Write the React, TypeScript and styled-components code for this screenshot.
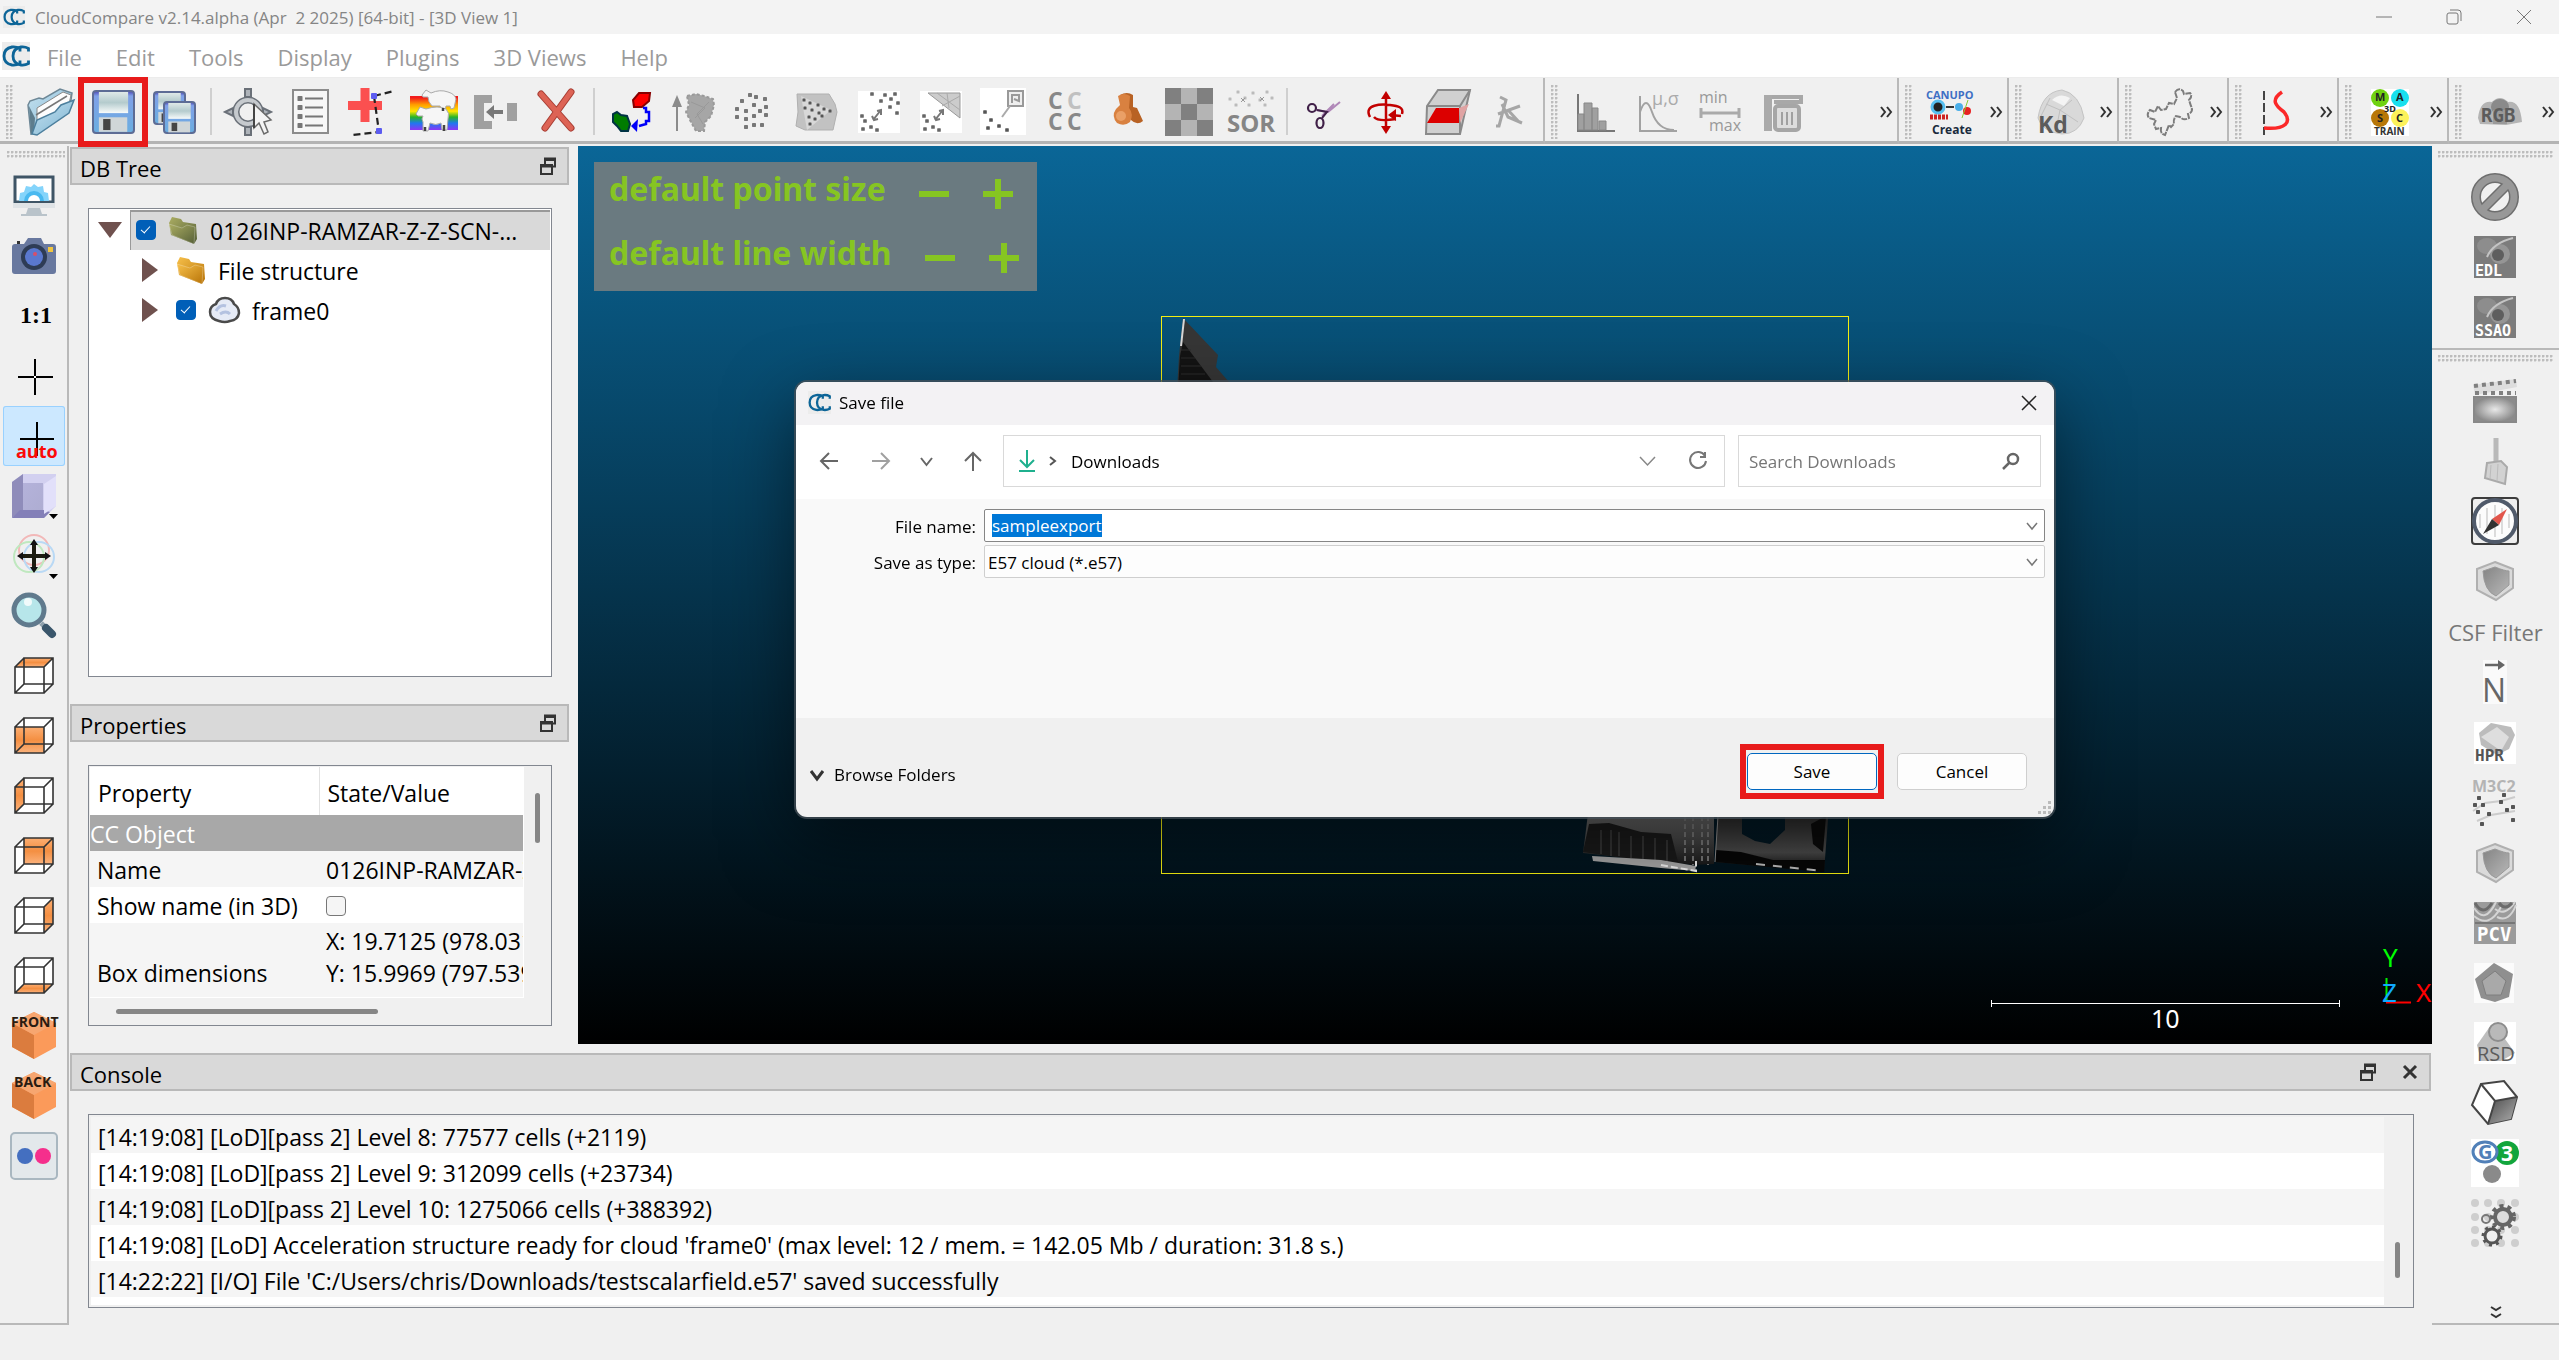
import React, { useEffect, useRef } from "react";
import styled, { createGlobalStyle } from "styled-components";

const Global = createGlobalStyle`
  *, *::before, *::after { box-sizing: border-box; }
  html, body { margin: 0; padding: 0; background: #f0f0f0; }
  body, button, input, select { font-family: "Open Sans", "Noto Sans", sans-serif; color: #000; }
  button, input, select { margin: 0; padding: 0; border: 0; background: none; border-radius: 0; outline: 0; }
  svg { display: block; flex: none; }
`;

/* ---------- layout ---------- */
const App_ = styled.div`
  display: flex;
  flex-direction: column;
  height: 100vh;
  overflow: hidden;
  font-size: 22px;
`;
const TitleBar = styled.header`
  display: flex;
  align-items: center;
  height: 34px;
  flex: none;
  padding-left: 3px;
  gap: 10px;
  background: #f3f3f3;
  color: #858585;
  font-size: 17px;
  white-space: pre;
`;
const WindowButtons = styled.div`
  display: flex;
  margin-left: auto;
`;
const WindowButton = styled.button`
  display: grid;
  place-items: center;
  width: 70px;
  height: 34px;
`;
const MenuBar = styled.nav`
  display: flex;
  align-items: center;
  height: 44px;
  flex: none;
  padding-left: 2px;
  background: #fff;
  border-bottom: 1px solid #ececec;
`;
const MenuItem = styled.button`
  height: 43px;
  padding: 2px 17px 0;
  color: #9a9a9a;
  font-size: 22px;
`;
const ToolStrip = styled.div`
  display: flex;
  height: 66px;
  flex: none;
  background: #f0f0f0;
`;
const ToolGroup = styled.div<{ $grow?: boolean; $wide?: number }>`
  display: flex;
  align-items: center;
  flex: ${(p) => (p.$grow ? "1 1 0" : "none")};
  width: ${(p) => (p.$wide ? p.$wide + "px" : "auto")};
  padding-top: 4px;
  border-right: 2px solid #b9b9b9;
  border-bottom: 3px solid #b4b4b4;
  &:first-child { padding-right: 2px; }
  &:last-child { border-right: 0; }
`;
const Grip = styled.span<{ $across?: boolean }>`
  flex: none;
  width: ${(p) => (p.$across ? "auto" : "8px")};
  height: ${(p) => (p.$across ? "8px" : "54px")};
  margin: ${(p) => (p.$across ? "5px 5px 9px 6px" : "0 6px")};
  background-image: radial-gradient(circle at 1px 1px, #bdbdbd 1px, transparent 2px);
  background-size: 4px 4px;
`;
const Divider = styled.span`
  flex: none;
  width: 2px;
  height: 47px;
  margin: 0 5px 0 4px;
  background: #cfcfcf;
`;
const Tool = styled.button<{ $on?: boolean }>`
  position: relative;
  display: grid;
  place-items: center;
  flex: none;
  width: 62px;
  height: 60px;
  border-radius: 3px;
  background: ${(p) => (p.$on ? "#cce8ff" : "transparent")};
  box-shadow: ${(p) => (p.$on ? "inset 0 0 0 1px #99d1ff" : "none")};
`;
const More = styled.button`
  display: grid;
  place-items: center;
  width: 16px;
  height: 40px;
  margin-left: auto;
  margin-right: 3px;
`;
const Highlight = styled.span<{ $x: number; $y: number }>`
  position: absolute;
  inset: ${(p) => `${p.$y}px ${p.$x}px`};
  border: 6px solid #e81b1b;
  pointer-events: none;
`;
const Main = styled.main`
  display: grid;
  grid-template-columns: 70px minmax(0, 1fr) 127px;
  flex: 1;
  min-height: 0;
  padding-top: 2px;
  padding-bottom: 35px;
`;
const LeftBar = styled.div`
  display: flex;
  flex-direction: column;
  align-items: flex-start;
  width: 69px;
  padding-left: 3px;
  border-right: 2px solid #b9b9b9;
  border-bottom: 2px solid #b9b9b9;
  & > ${Grip} { width: 58px; margin-left: 4px; margin-bottom: 7px; }
`;
const RightBar = styled.div`
  display: flex;
  flex-direction: column;
  border-bottom: 2px solid #b9b9b9;
`;
const RightGroup = styled.div<{ $grow?: boolean }>`
  display: flex;
  flex-direction: column;
  flex: ${(p) => (p.$grow ? 1 : "none")};
  padding-bottom: ${(p) => (p.$grow ? 0 : 1)}px;
  border-bottom: ${(p) => (p.$grow ? 0 : 2)}px solid #b9b9b9;
  & > ${Tool} { align-self: center; margin-right: 1px; }
  & > ${Grip} { margin-bottom: 8px; }
`;
const TextTool = styled.button`
  height: 42px;
  color: #777;
  font-size: 22px;
`;
const MoreDown = styled.button`
  display: grid;
  place-items: center;
  height: 22px;
  margin-top: auto;
`;
const Centre = styled.div`
  display: flex;
  flex-direction: column;
  min-width: 0;
`;
const Upper = styled.div`
  display: flex;
  flex: 1;
  min-height: 0;
`;
const Docks = styled.div`
  display: flex;
  flex-direction: column;
  flex: none;
  width: 508px;
  padding-right: 9px;
  padding-top: 1px;
`;
const Dock = styled.section<{ $grow?: boolean }>`
  display: flex;
  flex-direction: column;
  flex: ${(p) => (p.$grow ? "1 1 0" : "none")};
  min-height: 0;
`;
const DockTitle = styled.h2`
  display: flex;
  align-items: center;
  flex: none;
  height: 38px;
  margin: 0;
  padding: 4px 11px 0 8px;
  border: 2px solid #b9b9b9;
  background: #d9d9d9;
  font-size: 22px;
  line-height: 30px;
  font-weight: 400;
`;
const DockButtons = styled.span`
  display: flex;
  gap: 26px;
  margin-left: auto;
  padding-bottom: 4px;
`;
const Frame = styled.div`
  flex: 1;
  min-height: 0;
  margin: 23px 17px 27px 18px;
  border: 1px solid #828790;
  background: #fff;
`;
const Tree = styled.ul`
  margin: 0;
  padding: 1px;
  list-style: none;
`;
const TreeRow = styled.li<{ $depth: number }>`
  display: flex;
  align-items: center;
  height: 40px;
  padding-left: ${(p) => 4 + p.$depth * 40}px;
  font-size: 23px;
`;
const Twisty = styled.button`
  display: grid;
  place-items: center;
  flex: none;
  width: 32px;
  height: 40px;
  margin-right: 4px;
`;
const Node = styled.span<{ $selected?: boolean }>`
  display: flex;
  align-items: center;
  flex: 1;
  min-width: 0;
  height: 40px;
  padding-left: 6px;
  gap: 12px;
  background: ${(p) => (p.$selected ? "#d9d9d9" : "transparent")};
  box-shadow: ${(p) => (p.$selected ? "inset 1px 2px 0 #999" : "none")};
`;
const NodeName = styled.span`
  overflow: hidden;
  padding-top: 2px;
  white-space: nowrap;
`;
const Tick = styled.input`
  appearance: none;
  position: relative;
  flex: none;
  display: block;
  width: 20px;
  height: 20px;
  border: 1px solid #777;
  border-radius: 4px;
  background: #f5f5f5;
  &:checked { background: #005fb8; border-color: #005fb8; }
  &:checked::after {
    content: "";
    position: absolute;
    left: 6px;
    top: 3px;
    width: 5px;
    height: 9px;
    border: solid #fff;
    border-width: 0 1px 1px 0;
    transform: rotate(42deg);
  }
`;
const PropFrame = styled.div`
  display: grid;
  grid-template-columns: minmax(0, 1fr) 27px;
  grid-template-rows: 231px 27px;
  margin: 23px 17px 18px 18px;
  padding: 1px 0 0 1px;
  height: 261px;
  border: 1px solid #828790;
  background: #f0f0f0;
`;
const PropClip = styled.div`
  overflow: hidden;
  border-right: 1px solid #fff;
  border-bottom: 1px solid #fff;
`;
const PropTable = styled.table`
  width: 640px;
  table-layout: fixed;
  border-collapse: collapse;
  background: #fff;
  font-size: 23px;
  line-height: 32px;
  white-space: nowrap;
  th { height: 48px; padding: 3px 0 0 8px; text-align: left; font-weight: 400; }
  th + th { border-left: 1px solid #e2e2e2; }
  th:first-child { width: 229px; }
  td { height: 36px; padding: 2px 0 0 7px; }
`;
const PropRow = styled.tr<{ $tone: "head" | "odd" | "even" }>`
  background: ${(p) => ({ head: "#a8a8a8", odd: "#f5f5f5", even: "#fff" })[p.$tone]};
  color: ${(p) => (p.$tone === "head" ? "#fff" : "#000")};
  & > td[colspan] { padding-left: 0; }
`;
const Track = styled.div<{ $flat?: boolean }>`
  display: flex;
  justify-content: ${(p) => (p.$flat ? "flex-start" : "center")};
  align-items: ${(p) => (p.$flat ? "center" : "flex-start")};
`;
const Thumb = styled.span<{ $w: number; $h: number; $before: string }>`
  width: ${(p) => p.$w}px;
  height: ${(p) => p.$h}px;
  margin: ${(p) => p.$before};
  border-radius: 3px;
  background: #868686;
`;
const ConsoleDock = styled.section`
  flex: none;
  margin-top: 9px;
  padding-right: 1px;
`;
const ConsoleFrame = styled.div`
  display: flex;
  height: 194px;
  margin: 23px 17px 17px 18px;
  padding: 2px 0 2px 2px;
  border: 1px solid #828790;
  background: #f0f0f0;
`;
const Lines = styled.ol`
  flex: 1;
  margin: 0;
  padding: 0;
  list-style: none;
  background: #fff;
  font-size: 23px;
`;
const Line = styled.li`
  height: 36px;
  padding-left: 7px;
  line-height: 40px;
  &:nth-child(odd) { background: #f5f5f5; }
`;

/* ---------- 3D view ---------- */
const View = styled.div`
  position: relative;
  flex: 1;
  overflow: hidden;
  background: linear-gradient(#0a6697, #000);
`;
const HotZone = styled.div`
  position: absolute;
  left: 16px;
  top: 16px;
  width: 443px;
  padding: 0 0 1px 15px;
  background: #6a7a80;
`;
const HotRow = styled.div`
  display: flex;
  align-items: center;
  gap: 33px;
  height: 64px;
  padding-bottom: 10px;
  color: #86c522;
  font: bold 32px/36px "Noto Sans", sans-serif;
`;
const HotButtons = styled.span`
  display: flex;
  gap: 34px;
  padding-top: 10px;
`;
const Cloud = styled.svg`
  position: absolute;
  left: 583px;
  top: 170px;
`;
const Corner = styled.svg`
  position: absolute;
  right: 0;
  bottom: 0;
`;

/* ---------- dialog ---------- */
const Dialog = styled.div`
  position: fixed;
  left: 796px;
  top: 382px;
  width: 1258px;
  border-radius: 11px;
  overflow: hidden;
  background: #f0f0f0;
  font-size: 17px;
`;
const DialogShade = styled.div`
  & > ${Dialog} { box-shadow: 0 0 0 2px rgba(70, 80, 88, 0.75), 0 24px 70px rgba(0, 0, 0, 0.5); }
`;
const DialogTitle = styled.div`
  display: flex;
  align-items: center;
  gap: 8px;
  height: 43px;
  padding: 0 17px 2px 12px;
  background: #f3f2f4;
  & > button { margin-left: auto; }
`;
const NavRow = styled.div`
  display: flex;
  align-items: center;
  height: 74px;
  padding: 0 13px 2px 8px;
  background: #fff;
`;
const NavButton = styled.button<{ $w: number }>`
  display: grid;
  place-items: center;
  width: ${(p) => p.$w}px;
  height: 50px;
`;
const Address = styled.div`
  display: flex;
  align-items: center;
  flex: 1;
  height: 52px;
  margin-left: 2px;
  margin-right: 13px;
  padding: 0 16px 0 15px;
  gap: 14px;
  border: 1px solid #d9d9d9;
  & > :nth-child(4) { margin-left: auto; margin-right: 18px; }
`;
const SearchBox = styled.label`
  display: flex;
  align-items: center;
  width: 303px;
  height: 52px;
  padding: 0 20px 0 10px;
  border: 1px solid #d9d9d9;
  & > input { flex: 1; min-width: 0; font-size: 17px; height: 40px; }
  & > input::placeholder { color: #767676; opacity: 1; }
`;
const Fields = styled.div`
  display: grid;
  grid-template-columns: 180px 1fr;
  grid-auto-rows: 33px;
  row-gap: 3px;
  column-gap: 8px;
  align-content: start;
  align-items: center;
  height: 219px;
  padding: 10px 9px 0 0;
  background: #f9f9f9;
  & > label { text-align: right; padding-top: 2px; }
`;
const Combo = styled.div<{ $strong?: boolean }>`
  display: flex;
  align-items: center;
  position: relative;
  height: 33px;
  border: 1px solid ${(p) => (p.$strong ? "#868686" : "#cfcfcf")};
  border-radius: 2px;
  background: ${(p) => (p.$strong ? "#fff" : "#fdfdfd")};
  & > input { flex: 1; height: 29px; padding-left: 7px; font-size: 17px; line-height: 25px; }
  & > input::selection { background: #0078d7; color: #fff; }
  & > select { flex: 1; height: 31px; padding: 2px 0 0 3px; font-size: 17px; appearance: none; }
  & > svg { position: absolute; right: 6px; top: 12px; pointer-events: none; }
`;
const Footer = styled.div`
  display: flex;
  align-items: center;
  height: 99px;
  padding: 14px 27px 0 14px;
  gap: 20px;
  position: relative;
`;
const Browse = styled.button`
  display: flex;
  align-items: center;
  gap: 10px;
  height: 30px;
  margin-right: auto;
  font-size: 17px;
`;
const Push = styled.button<{ $main?: boolean }>`
  position: relative;
  width: 130px;
  height: 37px;
  margin-bottom: 6px;
  border: 1px solid ${(p) => (p.$main ? "#0067c0" : "#cfcfcf")};
  border-radius: 5px;
  background: #fdfdfd;
  font-size: 17px;
`;
const SizeGrip = styled.svg`
  position: absolute;
  right: 3px;
  bottom: 3px;
`;

/* ---------- drawings ---------- */
type Kids = { children?: React.ReactNode; w?: number; h?: number; box?: string };
const I = ({ children, w = 48, h = 48, box }: Kids) => (
  <svg width={w} height={h} viewBox={box ?? `0 0 ${w} ${h}`} fill="none" overflow="visible" aria-hidden="true">{children}</svg>
);
const T = ({ x, y, s, c = "#777", children, f = "Open Sans", b = true }: { x: number; y: number; s: number; c?: string; children: string; f?: string; b?: boolean }) => (
  <text x={x} y={y} fontSize={s} fill={c} fontFamily={f} fontWeight={b ? 700 : 400}>{children}</text>
);
const Dots = ({ at, r = 2, c = "#777" }: { at: number[][]; r?: number; c?: string }) => (
  <g fill={c}>{at.map(([x, y], i) => <rect key={i} x={x - r} y={y - r} width={r * 2} height={r * 2} rx={r / 3} />)}</g>
);
const Logo = ({ s }: { s: number }) => (
  <I w={s} h={s} box="0 0 28 28">
    <rect width="28" height="28" fill="#ececec" />
    <path d="M18 9.500V6.500Q14 4.500 10 5Q2 6.500 2 14Q2 21.500 10 23Q14 23.500 18 21.500V18.500" stroke="#0d6598" strokeWidth="2.800" />
    <path d="M26.500 9.500V6.500Q23 4.500 19 5Q11 6.500 11 14Q11 21.500 19 23Q23 23.500 26.500 21.500V18.500" stroke="#0d6598" strokeWidth="2.800" />
  </I>
);
const Defs = () => (
  <svg width="0" height="0" style={{ position: "absolute" }} aria-hidden="true">
    <defs>
      <linearGradient id="blue" x2="0" y2="1"><stop stopColor="#4c44b4" /><stop offset=".12" stopColor="#7fa0e8" /><stop offset="1" stopColor="#6aaee0" /></linearGradient>
      <linearGradient id="paper" x2="0" y2="1"><stop stopColor="#dfe9e8" /><stop offset=".5" stopColor="#b4cbcd" /><stop offset="1" stopColor="#f8fbfb" /></linearGradient>
      <linearGradient id="folder" x2="1" y2="1"><stop stopColor="#c6e2f0" /><stop offset="1" stopColor="#7db4d2" /></linearGradient>
      <linearGradient id="gold" x2="1" y2="1"><stop stopColor="#f7c04a" /><stop offset="1" stopColor="#b87408" /></linearGradient>
      <linearGradient id="olive" x2="1" y2="1"><stop stopColor="#abad62" /><stop offset="1" stopColor="#566038" /></linearGradient>
      <linearGradient id="grey" x2="1" y2="1"><stop stopColor="#848484" /><stop offset="1" stopColor="#b8b8b8" /></linearGradient>
      <radialGradient id="shine"><stop stopColor="#e8e8e8" /><stop offset="1" stopColor="#8b8b8b" /></radialGradient>
      <linearGradient id="dark" x2="1" y2="1"><stop stopColor="#4a4a4a" /><stop offset="1" stopColor="#b0b0b0" /></linearGradient>
      <linearGradient id="rainbow" x2="0" y2="1">
        <stop offset=".05" stopColor="#f21c1c" /><stop offset=".25" stopColor="#ff9b00" /><stop offset=".45" stopColor="#ffe600" /><stop offset=".62" stopColor="#27b427" /><stop offset=".8" stopColor="#1e78f0" /><stop offset="1" stopColor="#8d35f5" />
      </linearGradient>
      <linearGradient id="orange" x2="0" y2="1"><stop stopColor="#fcae72" /><stop offset=".5" stopColor="#f48f42" /><stop offset="1" stopColor="#fbb27c" /></linearGradient>
      <linearGradient id="cubeBack" x2="1" y2="1"><stop stopColor="#b4b2da" /><stop offset="1" stopColor="#aeadd2" /></linearGradient>
      <linearGradient id="scanA" x2="0" y2="1"><stop stopColor="#777" /><stop offset=".55" stopColor="#484848" /><stop offset="1" stopColor="#191919" /></linearGradient>
      <linearGradient id="scanB" x2="0" y2="1"><stop stopColor="#222" /><stop offset=".7" stopColor="#4b4b4b" /><stop offset="1" stopColor="#050505" /></linearGradient>
    </defs>
  </svg>
);

const OpenIcon = () => (
  <I><path d="M1 17 L3 13 L12 10 L16 11 L33 1 L45 5 L44 12 L12 44 L4 46 Z" fill="url(#folder)" stroke="#6d8796" strokeWidth="1.500" />
    <path d="M10 20 L36 4 L44 7 L42 16 L10 36 Z" fill="#fdfdfd" stroke="#888" /><path d="M9 27 L40 8" stroke="#777" strokeWidth="1.500" /><path d="M2 18L4 45L7 46L8 30Z" fill="#5e7d8d" />
    <path d="M5 46 L10 32 L28 24 L34 17 L47 12 L42 25 L10 47 Z" fill="url(#folder)" stroke="#4c7f9d" strokeWidth="1.500" /></I>
);
const Disk = ({ x, y, w, h }: { x: number; y: number; w: number; h: number }) => (
  <g><rect x={x + 1} y={y + 1} width={w - 2} height={h - 2} rx="3" fill="url(#blue)" stroke="#5d6c95" strokeWidth="2" />
    <rect x={x + w * 0.16} y={y + 2} width={w * 0.68} height={h * 0.48} fill="url(#paper)" />
    <rect x={x + w * 0.16} y={y + h * 0.62} width={w * 0.66} height={h * 0.33} fill="#d0d6d8" />
    <rect x={x + w * 0.26} y={y + h * 0.66} width={w * 0.17} height={h * 0.25} fill="#454545" /></g>
);
const SaveIcon = () => <I><Disk x={3} y={2} w={43} h={44} /></I>;
const SaveAllIcon = () => <I><Disk x={2} y={3} w={33} h={34} /><Disk x={12} y={13} w={33} h={33} /></I>;
const PickIcon = () => (
  <I><path d="M21 1H27V9H21ZM21 39H27V47H21ZM1 24L9 20V28ZM47 24L39 20V28Z" fill="#aeb3b9" stroke="#6a7078" strokeWidth="2" />
    <circle cx="24" cy="24" r="12" stroke="#6a7078" strokeWidth="7" /><circle cx="24" cy="24" r="12" stroke="#c6cace" strokeWidth="4" />
    <path d="M30 16V40L35 35L40 46L44 44L40 34L47 32Z" fill="#f4f4f4" stroke="#6a6a6a" strokeWidth="1.500" /><path d="M30 16V40" stroke="#444" strokeWidth="2" /></I>
);
const ListIcon = () => (
  <I><rect x="7" y="2" width="35" height="43" fill="#f7f7f7" stroke="#8c8c8c" strokeWidth="2" />
    <path d="M19 10.500H37M19 19.500H37M19 28.500H37M19 37.500H37" stroke="#777" strokeWidth="2" /><Dots at={[[14, 10.500], [14, 19.500], [14, 28.500], [14, 37.500]]} r={2.500} /></I>
);
const AddPointIcon = () => (
  <I><path d="M0 17.500H34M17 0V34" stroke="#fb5050" strokeWidth="9" /><path d="M26 8 L46 3 M26 8 L31 44 L4 47" stroke="#222" strokeWidth="2.200" strokeDasharray="7 4" /><Dots at={[[26, 8], [31, 43]]} r={3} c="#5b5bf0" /></I>
);
const SheepIcon = () => (
  <I><rect y="8" width="48" height="34" fill="url(#rainbow)" />
    <path d="M12 7L16 2L21 5Q30 1 38 4Q45 6 46 11L44 20L41 21L40 18H36L35 23H32L30 18H22Q18 14 18 9L13 9Z" fill="#f6f6f6" stroke="#aaa" />
    <path d="M6 26L10 19L16 21Q28 17 36 21Q40 25 38 31L37 42H32L31 35Q26 38 20 35L18 43H13L13 34Q11 31 13 28L8 28Z" fill="#f6f6f6" stroke="#aaa" />
    <path d="M15 39V43M34 37V43M33 20V23" stroke="#444" strokeWidth="2.500" /></I>
);
const MergeIcon = () => (
  <I><path d="M2 7H20V15H12V33H20V41H2Z" fill="#a0a0a0" /><rect x="35" y="15" width="10" height="18" fill="#a0a0a0" /><path d="M14 24 L22 17 V22 H31 V26 H22 V31 Z" fill="#777" /></I>
);
const DeleteIcon = () => <I><path d="M7 6 L37 40 M37 4 L11 40" stroke="#a83e34" strokeWidth="7" strokeLinecap="round" /><path d="M7 6 L37 40 M37 4 L11 40" stroke="#dd6355" strokeWidth="5" strokeLinecap="round" /></I>;
const CloneIcon = () => (
  <I><path d="M32 5H43L42 13L35 19H27L26 12Z" fill="#fe0000" stroke="#800" strokeWidth="2" /><path d="M10 24L14 27L20 28L23 36L21 43H14L10 38L6 34V26Z" fill="#007c00" stroke="#034" strokeWidth="2" />
    <path d="M36 20H39V24H42V33H39V36L32 38" stroke="#0000f8" strokeWidth="2.500" /><path d="M24 38 L31 31 L30 44 Z" fill="#0000f8" /></I>
);
const NormalsIcon = () => <I><path d="M8 43V10" stroke="#8b8b8b" strokeWidth="2" /><path d="M8 7L13 19H3Z" fill="#8b8b8b" /><path d="M18 8L27 6L35 8L44 11L45 17L42 28L36 34L35 43H27L22 34L17 24L20 17Z" fill="#a6a6a6" stroke="#9a9a9a" strokeWidth="2" strokeDasharray="3 2" /><path d="M22 14L36 20L26 30M40 14L28 26L34 36" stroke="#999" /></I>;
const ring = [[19, 7], [25, 9], [11, 13], [34, 11], [35, 19], [23, 17], [6, 21], [15, 23], [29, 23], [6, 29], [15, 31], [23, 28], [35, 27], [15, 39], [23, 37], [31, 37]];
const SubsampleIcon = () => <I><Dots at={ring} /></I>;
const OctreeIcon = () => <I><path d="M4 6H36L42 16L44 24L40 42H12L3 38L5 24Z" fill="#c2c2c2" stroke="#b0b0b0" /><path d="M8 8L38 22L14 42Z" fill="#d8d8d8" /><Dots at={[[11, 12], [17, 15], [12, 20], [19, 22], [25, 17], [31, 21], [37, 23], [26, 25], [16, 29], [22, 31], [29, 28], [17, 36]]} r={1.500} c="#555" /></I>;
const White = ({ children, big }: { children: React.ReactNode; big?: boolean }) => <I><rect x={big ? 1 : 3} y={big ? 0 : 3} width={big ? 46 : 42} height={big ? 47 : 42} fill="#fff" />{children}</I>;
const lowDots = [[7, 28], [10, 33], [8, 41], [16, 39], [22, 42]];
const highDots = [[17, 6], [30, 7], [40, 6], [36, 11], [43, 15], [26, 13], [35, 19], [42, 25]];
const DistArrow = () => <path d="M18 32L26 22M17 28L19 32L23 31M22 23L26 22L26 27" stroke="#777" strokeWidth="2" />;
const CloudDistIcon = () => <White><Dots at={[...lowDots, ...highDots]} c="#666" r={1.800} /><DistArrow /></White>;
const MeshDistIcon = () => <White><path d="M11 5H43V30Z" fill="#ccc" stroke="#999" /><path d="M20 5L43 22M30 5L32 20M43 8L25 18" stroke="#aaa" /><Dots at={lowDots} c="#666" r={1.800} /><DistArrow /></White>;
const PrimDistIcon = () => <White big><rect x="29" y="3" width="15" height="15" stroke="#999" strokeWidth="2" fill="#eee" /><path d="M33 15V7H40V13L35 11" stroke="#999" strokeWidth="2" /><path d="M23 29L31 18" stroke="#aaa" strokeWidth="2" /><Dots at={[[6, 24], [12, 32], [20, 38], [9, 40], [28, 42]]} c="#555" r={1.800} /></White>;
const LabelIcon = () => <I><T x={7} y={21} s={23} c="#888">C</T><T x={26} y={21} s={23} c="#c0c0c0">C</T><T x={7} y={42} s={23} c="#888">C</T><T x={26} y={42} s={23} c="#888">C</T></I>;
const SegIcon = () => <I><path d="M17 7Q24 3 30 7L30 19L34 20L40 33Q34 38 28 32Z" fill="#b86224" /><path d="M15 8Q21 4 27 8L26 20Q31 26 27 34Q21 39 14 35Q8 28 13 21L17 17Z" fill="#d98140" /><circle cx="18" cy="28" r="5" fill="#eaa066" /></I>;
const CheckerIcon = () => <I><rect width="48" height="48" fill="#808080" /><path d="M16 0H32V16H16ZM0 16H16V32H0ZM32 16H48V32H32ZM16 32H32V48H16Z" fill="#b4b4b4" /></I>;
const SorIcon = () => <I><Dots at={[[3, 11], [11, 4], [18, 10], [26, 5], [33, 12], [40, 4], [45, 10], [9, 17], [22, 17], [38, 17]]} c="#bbb" r={1.500} /><path d="M14 10l4 4m0-4l-4 4M33 9l4 4m0-4l-4 4" stroke="#999" /><T x={0} y={44} s={24} c="#858585">SOR</T></I>;
const ScissorsIcon = () => <I><path d="M16 22L28 24L40 14M22 28L34 16" stroke="#b087b8" strokeWidth="2" /><path d="M17 22L27 24L22 30" stroke="#402048" strokeWidth="2" /><circle cx="12" cy="20" r="4" stroke="#402048" strokeWidth="2.200" /><ellipse cx="20" cy="35" rx="3.500" ry="5" stroke="#402048" strokeWidth="2.200" /></I>;
const MoveIcon = () => <I><path d="M24 6V42M8 29C1 16 20 16 28 17S42 19 40 26M39 28L28 27M12 29Q16 34 34 31" stroke="#c20000" strokeWidth="2.500" /><path d="M24 3L29 11H19ZM24 46L29 38H19ZM26 27L34 21V33Z" fill="#c20000" /></I>;
const CrossIcon = () => <I><path d="M3 18 L14 2 H46 L36 46 H2 Z" fill="#d0d0d0" stroke="#8a8a8a" strokeWidth="2" /><path d="M3 18H36L46 2M36 18V46" stroke="#8a8a8a" strokeWidth="2" /><path d="M12 20 H35 V35 H3 Z" fill="#dc0000" /><path d="M35 20L45 16L36 35Z" fill="#e0a3a3" /></I>;
const PolyIcon = () => <I><path d="M14 9L20 12L13 38L10 38M12 26L34 18M16 16L22 29L36 35M22 22L33 34" stroke="#a6a6a6" strokeWidth="3" /></I>;
const HistIcon = () => <I><path d="M6 6V43H43" stroke="#777" strokeWidth="2" /><path d="M6 26h6v16H6zM12 15h8v27h-8zM20 20h6v22h-6zM27 33h7v9h-7z" fill="#a0a0a0" stroke="#888" /></I>;
const StatIcon = () => <I><path d="M6 8V43H43M6 24Q12 6 18 24Q24 42 40 42" stroke="#a2a2a2" strokeWidth="2" /><T x={18} y={17} s={18} c="#aaa" b={false}>μ,σ</T></I>;
const MinMaxIcon = () => <I><T x={3} y={15} s={16} c="#999" b={false}>min</T><path d="M5 20V30M43 20V30M5 25H43" stroke="#aaa" strokeWidth="3" /><T x={13} y={43} s={16} c="#999" b={false}>max</T></I>;
const TrashIcon = () => <I><rect x="6" y="7" width="8" height="36" fill="#aaa" /><path d="M14 9H43V14H16" stroke="#a8a8a8" strokeWidth="4" /><rect x="17" y="18" width="24" height="24" rx="3" fill="#ddd" stroke="#a6a6a6" strokeWidth="4" /><path d="M24 24V37M29 24V37M34 24V37" stroke="#a0a0a0" strokeWidth="2" /></I>;
const CanupoIcon = () => <I><T x={0} y={11} s={11} c="#3d6fc4">CANUPO</T><circle cx="12" cy="19" r="6" fill="#222" stroke="#57bff0" strokeWidth="3" /><circle cx="33" cy="19" r="4" fill="#4aaee8" /><circle cx="41" cy="23" r="4" fill="#e82222" /><path d="M36 30L42 12" stroke="#8c3" /><path d="M4 29H22" stroke="#c22" strokeWidth="5" strokeDasharray="3 1" /><path d="M20 19H28" stroke="#333" strokeWidth="2" /><T x={6} y={46} s={12} c="#1a2b3d">Create</T></I>;
const KdIcon = () => <I><path d="M2 30 Q6 4 26 2 Q44 6 48 30 Q42 46 26 46 Q6 44 2 30 Z" fill="#d9d9d9" stroke="#c4c4c4" /><path d="M16 12Q24 4 34 10L28 18Z" fill="#f4f4f4" /><path d="M10 16L24 22L36 12M24 22L20 42M24 22L42 34M14 10L4 30" stroke="#c0c0c0" /><T x={2} y={45} s={23} c="#5b5b5b">Kd</T></I>;
const ContourIcon = () => <I><path d="M29 4Q33 -1 37 3L38 6L44 5Q47 8 43 12L45 18Q48 24 42 26L43 30Q38 33 34 29L30 28Q27 31 28 36L25 39L23 37L19 47Q14 46 15 40L10 41L8 36L10 32L3 30Q0 26 4 22L9 24L12 18L15 22L20 21L23 15L28 16L31 10Z" stroke="#7c7c7c" strokeWidth="2" strokeDasharray="6 1" /></I>;
const CurveIcon = () => <I><path d="M8 3V47" stroke="#444" strokeWidth="2" strokeDasharray="9 3" /><path d="M26 4C14 12 20 18 28 24C36 34 30 42 8 40" stroke="#fb2828" strokeWidth="3.500" /></I>;
const MascIcon = () => <I><rect x="5" y="1" width="38" height="47" fill="#fff" /><circle cx="14" cy="10" r="9" fill="#70d210" /><circle cx="34" cy="10" r="9" fill="#19e0ee" /><circle cx="14" cy="30" r="9" fill="#b87708" /><circle cx="34" cy="30" r="9" fill="#fcf25a" /><T x={9} y={13} s={11} c="#222">M</T><T x={30} y={13} s={11} c="#222">A</T><T x={18} y={24} s={9} c="#222">3D</T><T x={11} y={34} s={11} c="#222">S</T><T x={30} y={34} s={11} c="#222">C</T><T x={8} y={47} s={10} c="#333">TRAIN</T></I>;
const RgbIcon = () => <I><path d="M2 30 Q4 12 16 14 Q24 6 32 14 Q44 12 46 34 L30 37 L4 36 Z" fill="#b4b4b4" /><ellipse cx="24" cy="19" rx="9" ry="8" fill="#8a8a8a" /><path d="M17 22H31V36H17Z" fill="#9a9a9a" /><T x={5} y={34} s={19} c="#5c5c5c" f="DejaVu Sans Mono">RGB</T></I>;

const MonitorIcon = () => <I><rect x="5" y="5" width="38" height="25" fill="#fff" stroke="#3f5566" strokeWidth="3" /><path d="M9 29L10 21L14 20L16 14L21 15L24 12L28 15L33 14L34 20L38 21L39 29Z" fill="#84d4fb" /><path d="M14 29a10 10 0 0 1 20 0z" fill="#49b9f0" /><path d="M18 29a6 6 0 0 1 12 0z" fill="#fff" /><path d="M3 31H45V36H3Z" fill="#dfe3e6" /><path d="M18 36H30L32 42H37V44H11V42H16Z" fill="#b9c3ca" /></I>;
const CameraIcon = () => <I><path d="M14 12 L18 6 H31 L34 12 H43 Q46 12 46 15 V39 Q46 42 43 42 H5 Q2 42 2 39 V15 Q2 12 5 12 Z" fill="#68789f" /><circle cx="24" cy="25" r="13" fill="#2e3c55" /><circle cx="24" cy="25" r="9" fill="#5a78cf" /><circle cx="25" cy="22" r="2" fill="#d84f6a" /><rect x="38" y="15" width="5" height="5" fill="#f1c640" /><rect x="7" y="9" width="3" height="3" fill="#333" /></I>;
const OneIcon = () => <I><T x={10} y={31} s={24} c="#000" f="Liberation Serif">1:1</T></I>;
const PlusIcon = () => <I><path d="M8 25H43M25 7V43" stroke="#000" strokeWidth="2" /><rect x="24" y="24" width="2" height="2" fill="#fff" /></I>;
const AutoIcon = () => <I><path d="M10 27H44M27 10V44" stroke="#000" strokeWidth="2" /><T x={6} y={46} s={18} c="#fb0a0a">auto</T></I>;
const Caret = () => <path d="M39 42 H48 L43.500 47 Z" fill="#000" />;
const BoxIcon = () => <I><path d="M2 10 L13 2 H46 V34 L34 46 H2 Z" fill="#d2d0f0" /><path d="M2 10 L13 2 V38 L2 46 Z" fill="#8f8cba" /><path d="M13 11H33V38H13Z" fill="url(#cubeBack)" /><path d="M2 46L10 38H34L40 40L34 46Z" fill="#8480b8" /><path d="M34 12L46 4V34L34 42Z" fill="#e2e0fa" /><Caret /></I>;
const PanIcon = () => <I><circle cx="24" cy="18" r="15" stroke="#f2b8b8" strokeWidth="2" /><circle cx="29" cy="25" r="15" stroke="#b9d9f5" strokeWidth="2" /><circle cx="19" cy="25" r="15" stroke="#bfe8bf" strokeWidth="2" /><path d="M24 10V38M10 24H38" stroke="#1c1c10" strokeWidth="4" /><path d="M24 7l4 6h-8zM24 41l4-6h-8zM7 24l6-4v8zM41 24l-6-4v8z" fill="#111" /><Caret /></I>;
const ZoomIcon = () => <I><circle cx="19" cy="18" r="15" fill="#b7e6ea" stroke="#607a8d" strokeWidth="5" /><circle cx="18" cy="10" r="4" fill="#fff" opacity=".8" /><path d="M31 31 L36 36" stroke="#8fa1ad" strokeWidth="5" /><path d="M36 36L42 42" stroke="#3a566b" strokeWidth="8" strokeLinecap="round" /></I>;
const faces: Record<string, string> = { top: "M5 15L14 6H43L34 15Z", front: "M5 15H34V41H5Z", left: "M5 15L14 6V32L5 41Z", back: "M14 6H43V32H14Z", right: "M34 15L43 6V32L34 41Z", bottom: "M5 41L14 32H43L34 41Z" };
const CubeIcon = ({ face }: { face: string }) => <I><path d={faces.front} fill="#fff" /><path d={faces.top} fill="#fff" /><path d={faces.right} fill="#fff" /><path d={faces[face]} fill="url(#orange)" /><path d="M5 15H34V41H5ZM14 6H43V32H14ZM5 15L14 6M34 15L43 6M34 41L43 32M5 41L14 32" stroke="#333" strokeWidth="1.600" /></I>;
const IsoIcon = ({ text, x }: { text: string; x: number }) => <I><path d="M24 0L46 11V35L24 47L2 35V11Z" fill="#fb9a5a" /><path d="M2 11L24 23V47L2 35Z" fill="#db7c3e" /><path d="M24 0L46 11L24 23L2 11Z" fill="#f7a670" /><T x={x} y={15} s={14} c="#2a1c12">{text}</T></I>;
const FlickrIcon = () => <I><rect x="1" y="1" width="46" height="46" rx="4" fill="#e3e8eb" stroke="#a9b7c0" strokeWidth="2" /><circle cx="15" cy="24" r="8" fill="#446fc0" /><circle cx="33" cy="24" r="8" fill="#f52f8c" /></I>;

const BanIcon = () => <I><circle cx="24" cy="24" r="19" stroke="#6e6e6e" strokeWidth="10" /><path d="M11 37L37 11" stroke="#6e6e6e" strokeWidth="10" /><circle cx="24" cy="24" r="19" stroke="#989898" strokeWidth="7" /><path d="M10 38L38 10" stroke="#989898" strokeWidth="7" /></I>;
const Shot = ({ children }: { children: React.ReactNode }) => <I><rect x="3" y="3" width="42" height="42" fill="#7c7c7c" /><ellipse cx="16" cy="13" rx="10" ry="8" fill="#8d8d8d" /><circle cx="29" cy="21" r="10" fill="#959595" /><circle cx="27" cy="22" r="6" fill="#5e5e5e" /><path d="M16 24Q22 10 42 5" stroke="#c4c4c4" strokeWidth="2" />{children}</I>;
const EdlIcon = () => <Shot><T x={4} y={43} s={15} c="#fff" f="DejaVu Sans Mono">EDL</T></Shot>;
const SsaoIcon = () => <Shot><T x={4} y={43} s={15} c="#fff" f="DejaVu Sans Mono">SSAO</T></Shot>;
const ClapIcon = () => <I><path d="M2 8 L45 2 L46 10 L4 18 Z" fill="#ddd" /><path d="M3 9L45 4" stroke="#808080" strokeWidth="4" strokeDasharray="4 4" /><path d="M4 16H45" stroke="#808080" strokeWidth="4" strokeDasharray="4 4" /><rect x="3" y="20" width="42" height="25" fill="url(#shine)" stroke="#888" strokeWidth="2" /></I>;
const BroomIcon = () => <I><path d="M25 1V26" stroke="#b9b9b9" strokeWidth="5" /><path d="M16 26L30 24L36 30L34 47L14 41Z" fill="#d2d2d2" stroke="#aaa" strokeWidth="2" /><path d="M20 28L19 42M27 27L26 44" stroke="#bbb" /></I>;
const CompassIcon = () => <I><rect x="1" y="1" width="46" height="46" rx="3" fill="#eee" stroke="#3c3c3c" strokeWidth="2" /><circle cx="24" cy="24" r="21" fill="#fcfcfc" stroke="#505a6a" strokeWidth="4" /><path d="M9 17v14M16 11v26M24 8v32M31 11v26M38 17v14" stroke="#bbb" /><path d="M36 12L28 28L21 22Z" fill="#e2564c" /><path d="M12 37L21 22L28 28Z" fill="#333" /></I>;
const ShieldIcon = () => <I><path d="M24 5L42 12V31L25 43L6 33V12Z" fill="#dadada" stroke="#b0b0b0" strokeWidth="2" /><path d="M24 10Q34 14 38 14V28L25 39Q13 34 12 14Z" fill="url(#grey)" stroke="#999" /></I>;
const NIcon = () => <I><rect x="12" y="1" width="24" height="44" fill="#fafafa" /><path d="M14 6H30" stroke="#666" strokeWidth="2.500" /><path d="M27 1L34 6L27 11Z" fill="#666" /><T x={11} y={43} s={32} c="#666" b={false}>N</T></I>;
const HprIcon = () => <White><path d="M8 14L20 4L40 8L44 16L38 30L26 36L10 26Z" fill="#bcbcbc" /><path d="M10 18L26 8L38 18L30 32Z" fill="#dedede" /><T x={4} y={42} s={16} c="#555" f="DejaVu Sans Mono">HPR</T></White>;
const M3Icon = () => <I><T x={1} y={13} s={16} c="#b4b4b4">M3C2</T><path d="M2 32L14 24L30 22L44 18M6 42L20 36L44 32" stroke="#ccc" strokeWidth="2" /><Dots at={[[8, 19], [4, 26], [12, 26], [33, 16], [30, 23], [42, 28], [18, 35], [11, 45], [36, 31], [42, 41], [7, 33]]} r={2} c="#555" /></I>;
const PcvIcon = () => <I><rect x="3" y="3" width="42" height="42" fill="#9b9b9b" /><path d="M3 9Q14 26 25 3M3 17Q18 30 30 8M26 18Q38 24 45 6M24 10Q34 18 44 3" stroke="#d4d4d4" strokeWidth="2" /><path d="M4 4Q12 18 21 4M28 4Q34 12 41 4" stroke="#6c6c6c" strokeWidth="3" /><path d="M4 24H44" stroke="#777" strokeWidth="2" /><T x={6} y={42} s={19} c="#fff" f="DejaVu Sans Mono">PCV</T></I>;
const PentIcon = () => <I><rect x="3" y="4" width="40" height="40" fill="#fbfbfb" /><path d="M23 4L42 15L38 38L24 43L10 39L4 20Z" fill="#8f8f8f" /><path d="M24 12L35 22L30 36H15L11 22Z" fill="#a9a9a9" stroke="#7e7e7e" /></I>;
const RsdIcon = () => <White><path d="M6 26L20 6L34 20L44 34L30 42H10Z" fill="#bdbdbd" /><circle cx="27" cy="13" r="9" fill="#b9b9b9" stroke="#8d8d8d" strokeWidth="2" /><T x={6} y={42} s={20} c="#5c5c5c" b={false}>RSD</T></White>;
const SolidIcon = () => <I><path d="M10 5L33 2L46 18L40 40L17 45L1 26Z" fill="#fff" stroke="#444" strokeWidth="2" /><path d="M24 22L46 18L40 40L17 45Z" fill="url(#dark)" /><path d="M10 5L24 22L46 18M24 22L17 45" stroke="#444" strokeWidth="2" /></I>;
const G3Icon = () => <I><rect width="48" height="48" fill="#fff" /><circle cx="36" cy="14" r="12" fill="#12a53c" /><ellipse cx="14" cy="13" rx="12" ry="10" fill="#fff" stroke="#5180b8" strokeWidth="3" /><T x={7} y={20} s={20} c="#5180b8">G</T><T x={30} y={22} s={21} c="#fff">3</T><circle cx="21" cy="35" r="9" fill="#8a8a8a" /></I>;
const GearsIcon = () => <I><g fill="#cecece">{[4, 17, 30, 44].flatMap((x) => [4, 18, 31, 44].map((y) => <circle key={x + "-" + y} cx={x} cy={y} r="4" />))}</g><circle cx="32" cy="18" r="8" fill="#dcdcdc" stroke="#666" strokeWidth="4" /><circle cx="32" cy="18" r="11" stroke="#666" strokeWidth="4" strokeDasharray="4 4" /><circle cx="21" cy="37" r="7" fill="#eee" stroke="#555" strokeWidth="3" /><circle cx="21" cy="37" r="9" stroke="#555" strokeWidth="3" strokeDasharray="3 4" /><circle cx="15" cy="20" r="4" stroke="#777" strokeWidth="2" /></I>;

const FloatIcon = () => <I w={16} h={18}><path d="M5 1.500H15V9.500H5Z" stroke="#333" strokeWidth="2" /><path d="M5 2.500H15" stroke="#333" strokeWidth="3" /><rect x="1" y="8" width="11" height="9" fill="#d9d9d9" stroke="#333" strokeWidth="2" /><path d="M1 9H12" stroke="#333" strokeWidth="3" /></I>;
const CloseBold = () => <I w={16} h={18}><path d="M2 3L14 15M14 3L2 15" stroke="#333" strokeWidth="3" /></I>;
const FolderIcon = ({ tone }: { tone: string }) => <I w={30} h={30}><path d="M4 2L13 4L15 7L28 9L29 24L26 29L3 20L1 8Z" fill={`url(#${tone})`} /><path d="M1 9L14 13L19 10L27 12L26 29L4 20Z" fill={`url(#${tone})`} stroke="#fff" strokeOpacity=".25" /></I>;
const CloudIcon = () => <I w={32} h={28}><path d="M8 8Q10 2 17 2Q24 2 26 8Q31 11 31 17Q30 24 22 25Q17 27 11 25Q2 23 2 16Q2 10 8 8Z" fill="#e6ebf6" stroke="#4a4a4a" strokeWidth="2.500" /><path d="M8 15Q12 8 18 10M12 18Q18 14 22 18" stroke="#b4c2e0" strokeWidth="3" /></I>;
const Down = ({ w = 12, h = 8, c = "#666", t = 1.5 }: { w?: number; h?: number; c?: string; t?: number }) => <I w={w} h={h}><path d={`M1 1L${w / 2} ${h - 1}L${w - 1} 1`} stroke={c} strokeWidth={t} /></I>;
const Chevrons = () => <I w={14} h={12}><path d="M2 1L6 6L2 11M8 1L12 6L8 11" stroke="#333" strokeWidth="2" /></I>;
const Minus = () => <I w={30} h={30}><rect y="12" width="30" height="6" fill="#86c522" /></I>;
const Plus = () => <I w={30} h={30}><path d="M0 12H12V0H18V12H30V18H18V30H12V18H0Z" fill="#86c522" /></I>;

const groups: [string, React.FC][][] = [
  [["Open", OpenIcon], ["Save", SaveIcon], ["Save all", SaveAllIcon]],
  [["Pick rotation center", PickIcon], ["Point list", ListIcon], ["Point picking", AddPointIcon], ["Clone", SheepIcon], ["Merge", MergeIcon], ["Delete", DeleteIcon]],
  [["Apply transformation", CloneIcon], ["Normals", NormalsIcon], ["Subsample", SubsampleIcon], ["Sample points", OctreeIcon], ["Cloud distance", CloudDistIcon], ["Mesh distance", MeshDistIcon], ["Primitive distance", PrimDistIcon], ["Label components", LabelIcon], ["Segment", SegIcon], ["Rasterize", CheckerIcon], ["SOR filter", SorIcon]],
  [["Cut", ScissorsIcon], ["Translate", MoveIcon], ["Cross section", CrossIcon], ["Trace polyline", PolyIcon]],
];
const scalar: [string, React.FC][] = [["Histogram", HistIcon], ["Statistics", StatIcon], ["Min max", MinMaxIcon], ["Delete scalar field", TrashIcon]];
const plugins: [string, React.FC][] = [["CANUPO", CanupoIcon], ["Kd-tree", KdIcon], ["Contour", ContourIcon], ["Curve", CurveIcon], ["3DMASC", MascIcon], ["RGB", RgbIcon]];
const leftTools: [string, React.ReactNode][] = [
  ["Display settings", <MonitorIcon />], ["Camera", <CameraIcon />], ["Zoom 1:1", <OneIcon />], ["Pivot", <PlusIcon />], ["Auto pivot", <AutoIcon />], ["View mode", <BoxIcon />], ["Pan", <PanIcon />], ["Zoom", <ZoomIcon />],
  ...["top", "front", "left", "back", "right", "bottom"].map((f): [string, React.ReactNode] => [f + " view", <CubeIcon face={f} />]),
  ["Front isometric", <IsoIcon text="FRONT" x={1} />], ["Back isometric", <IsoIcon text="BACK" x={4} />], ["Stereo", <FlickrIcon />],
];
const shaders: [string, React.FC][] = [["No filter", BanIcon], ["EDL", EdlIcon], ["SSAO", SsaoIcon]];
const rightA: [string, React.FC][] = [["Animation", ClapIcon], ["Broom", BroomIcon], ["Compass", CompassIcon], ["Cork", ShieldIcon]];
const rightB: [string, React.FC][] = [["Normals N", NIcon], ["HPR", HprIcon], ["M3C2", M3Icon], ["Shield", ShieldIcon], ["PCV", PcvIcon], ["Poisson", PentIcon], ["RSD", RsdIcon], ["Solid", SolidIcon], ["G3", G3Icon], ["Gears", GearsIcon]];
const log = [
  "[14:19:08] [LoD][pass 2] Level 8: 77577 cells (+2119)",
  "[14:19:08] [LoD][pass 2] Level 9: 312099 cells (+23734)",
  "[14:19:08] [LoD][pass 2] Level 10: 1275066 cells (+388392)",
  "[14:19:08] [LoD] Acceleration structure ready for cloud 'frame0' (max level: 12 / mem. = 142.05 Mb / duration: 31.8 s.)",
  "[14:22:22] [I/O] File 'C:/Users/chris/Downloads/testscalarfield.e57' saved successfully",
];
const tools = (list: [string, React.FC][]) => list.map(([name, Icon]) => (
  <Tool key={name} aria-label={name}><Icon />{name === "Save" && <Highlight $x={-4} $y={-5} />}</Tool>
));

const PointCloud = () => (
  <Cloud width="690" height="560" viewBox="0 0 690 560" fill="none" aria-hidden="true">
    <path d="M22 2L57 39L55 51L68 66L90 90H15L18 40Z" fill="#363636" />
    <path d="M22 26L52 66L60 90H16L19 40Z" fill="#131313" />
    <path d="M20 34H30M20 42H34M20 50H40M20 58H44" stroke="#2c2c2c" />
    <path d="M23 3L20 30" stroke="#d8d8d8" strokeWidth="2" />
    <path d="M428 490L422 537L533 549L553 548V490Z" fill="url(#scanA)" />
    <path d="M428 508L448 507L480 516L510 518L518 550L422 536Z" fill="#1a1a1a" />
    <path d="M440 514V538M450 514V540M458 516V540M470 520V542M482 520V544M494 522V546M506 524V546" stroke="#333" strokeWidth="2" />
    <path d="M524 500V546M532 500V549M541 500V548M547 500V549" stroke="#777" strokeWidth="2" strokeDasharray="5 3" />
    <path d="M431 540L500 544L535 550L534 555L500 552L432 545Z" fill="#a6a6a6" />
    <path d="M500 549L535 555V545" stroke="#f0f0f0" strokeWidth="2" strokeDasharray="7 3" />
    <path fillRule="evenodd" d="M557 490H668L663 556L554 546ZM581 496V518L594 525L609 528L624 514V496Z" fill="url(#scanB)" />
    <path d="M650 508L665 500L662 536L652 528Z" fill="#0b0b0b" />
    <path d="M555 534L580 536L612 544L664 544L663 556L554 546Z" fill="#070707" />
    <path d="M595 548L662 555" stroke="#bdbdbd" strokeWidth="2" strokeDasharray="9 8" />
    <path d="M557 500L554 546" stroke="#8f8f8f" />
    <rect x="0.500" y="0.500" width="687" height="557" stroke="#f4ee10" />
  </Cloud>
);

export default function App() {
  const nameRef = useRef<HTMLInputElement>(null);
  useEffect(() => {
    nameRef.current?.focus();
    nameRef.current?.select();
  }, []);
  return (
    <App_>
      <Global />
      <Defs />
      <TitleBar>
        <Logo s={22} />
        <span>CloudCompare v2.14.alpha (Apr  2 2025) [64-bit] - [3D View 1]</span>
        <WindowButtons>
          <WindowButton aria-label="Minimize"><I w={16} h={16}><path d="M0 8H16" stroke="#777" /></I></WindowButton>
          <WindowButton aria-label="Restore"><I w={16} h={16}><rect x="1" y="4" width="11" height="11" rx="2" stroke="#777" /><path d="M4 1H12Q15 1 15 4V12" stroke="#777" /></I></WindowButton>
          <WindowButton aria-label="Close"><I w={16} h={16}><path d="M1 1L15 15M15 1L1 15" stroke="#777" /></I></WindowButton>
        </WindowButtons>
      </TitleBar>
      <MenuBar>
        <Logo s={28} />
        {["File", "Edit", "Tools", "Display", "Plugins", "3D Views", "Help"].map((m) => <MenuItem key={m}>{m}</MenuItem>)}
      </MenuBar>
      <ToolStrip>
        <ToolGroup>
          <Grip />
          {groups.map((g, i) => <React.Fragment key={i}>{i > 0 && <Divider />}{tools(g)}</React.Fragment>)}
        </ToolGroup>
        <ToolGroup $grow><Grip />{tools(scalar)}<More aria-label="More"><Chevrons /></More></ToolGroup>
        {plugins.map((p) => <ToolGroup key={p[0]} $wide={110}><Grip />{tools([p])}<More aria-label="More"><Chevrons /></More></ToolGroup>)}
      </ToolStrip>
      <Main>
        <LeftBar>
          <Grip $across />
          {leftTools.map(([name, icon]) => <Tool key={name} aria-label={name} $on={name === "Auto pivot"}>{icon}</Tool>)}
        </LeftBar>
        <Centre>
          <Upper>
            <Docks>
              <Dock $grow>
                <DockTitle>DB Tree<DockButtons><button aria-label="Float DB Tree"><FloatIcon /></button></DockButtons></DockTitle>
                <Frame>
                  <Tree>
                    <TreeRow $depth={0}>
                      <Twisty aria-label="Collapse"><I w={24} h={16}><path d="M0 0H24L12 16Z" fill="#6f514e" /></I></Twisty>
                      <Node $selected><Tick type="checkbox" defaultChecked aria-label="Show scan" /><FolderIcon tone="olive" /><NodeName>0126INP-RAMZAR-Z-Z-SCN-...</NodeName></Node>
                    </TreeRow>
                    <TreeRow $depth={1}>
                      <Twisty aria-label="Expand"><I w={16} h={24}><path d="M0 0V24L16 12Z" fill="#6f514e" /></I></Twisty>
                      <Node><FolderIcon tone="gold" /><NodeName>File structure</NodeName></Node>
                    </TreeRow>
                    <TreeRow $depth={1}>
                      <Twisty aria-label="Expand"><I w={16} h={24}><path d="M0 0V24L16 12Z" fill="#6f514e" /></I></Twisty>
                      <Node><Tick type="checkbox" defaultChecked aria-label="Show frame0" /><CloudIcon /><NodeName>frame0</NodeName></Node>
                    </TreeRow>
                  </Tree>
                </Frame>
              </Dock>
              <Dock>
                <DockTitle>Properties<DockButtons><button aria-label="Float Properties"><FloatIcon /></button></DockButtons></DockTitle>
                <PropFrame>
                  <PropClip>
                    <PropTable>
                      <thead><tr><th>Property</th><th>State/Value</th></tr></thead>
                      <tbody>
                        <PropRow $tone="head"><td colSpan={2}>CC Object</td></PropRow>
                        <PropRow $tone="odd"><td>Name</td><td>0126INP-RAMZAR-Z-Z-SCN</td></PropRow>
                        <PropRow $tone="even"><td><label htmlFor="show-name">Show name (in 3D)</label></td><td><Tick id="show-name" type="checkbox" /></td></PropRow>
                        <PropRow $tone="odd"><td>Box dimensions</td><td>X: 19.7125 (978.031)<br />Y: 15.9969 (797.539)<br />&nbsp;</td></PropRow>
                      </tbody>
                    </PropTable>
                  </PropClip>
                  <Track><Thumb $w={5} $h={50} $before="26px 0 0" /></Track>
                  <Track $flat><Thumb $w={262} $h={5} $before="0 0 0 26px" /></Track>
                </PropFrame>
              </Dock>
            </Docks>
            <View>
              <PointCloud />
              <HotZone>
                {["default point size", "default line width"].map((t) => (
                  <HotRow key={t}>{t}<HotButtons><button aria-label={`Decrease ${t}`}><Minus /></button><button aria-label={`Increase ${t}`}><Plus /></button></HotButtons></HotRow>
                ))}
              </HotZone>
              <Corner width="450" height="110" viewBox="0 0 450 110" fill="none" aria-label="Scale and axes">
                <path d="M9 69.500H358M9.500 66V73M357.500 66V73" stroke="#fff" />
                <T x={169} y={94} s={25} c="#fff" b={false} f="Noto Sans">10</T>
                <path d="M404.500 44V68" stroke="#00f000" strokeWidth="2" />
                <path d="M404 68.500H429" stroke="#f00" strokeWidth="2" />
                <T x={401} y={33} s={26} c="#00ff00" b={false} f="Noto Sans">Y</T>
                <T x={400} y={68} s={26} c="#10a8ff" b={false} f="Noto Sans">Z</T>
                <T x={434} y={68} s={26} c="#ff0000" b={false} f="Noto Sans">X</T>
              </Corner>
            </View>
          </Upper>
          <ConsoleDock>
            <DockTitle>Console<DockButtons><button aria-label="Float Console"><FloatIcon /></button><button aria-label="Close Console"><CloseBold /></button></DockButtons></DockTitle>
            <ConsoleFrame>
              <Lines>{log.map((l) => <Line key={l}>{l}</Line>)}</Lines>
              <Track><Thumb $w={5} $h={36} $before="125px 13px 0 11px" /></Track>
            </ConsoleFrame>
          </ConsoleDock>
        </Centre>
        <RightBar>
          <RightGroup><Grip $across />{tools(shaders)}</RightGroup>
          <RightGroup $grow>
            <Grip $across />
            {tools(rightA)}
            <TextTool>CSF Filter</TextTool>
            {tools(rightB)}
            <MoreDown aria-label="More plugins"><I w={12} h={14}><path d="M1 2L6 5L11 2M1 9L6 12L11 9" stroke="#333" strokeWidth="2" /></I></MoreDown>
          </RightGroup>
        </RightBar>
      </Main>
      <DialogShade>
        <Dialog role="dialog" aria-label="Save file">
          <DialogTitle>
            <Logo s={23} />Save file
            <button aria-label="Close dialog"><I w={16} h={16}><path d="M1 1L15 15M15 1L1 15" stroke="#222" strokeWidth="1.500" /></I></button>
          </DialogTitle>
          <NavRow>
            <NavButton $w={50} aria-label="Back"><I w={18} h={18}><path d="M18 9H1M9 1L1 9L9 17" stroke="#666" strokeWidth="2" /></I></NavButton>
            <NavButton $w={54} aria-label="Forward"><I w={18} h={18}><path d="M0 9H17M9 1L17 9L9 17" stroke="#a0a0a0" strokeWidth="2" /></I></NavButton>
            <NavButton $w={37} aria-label="Recent"><Down w={13} h={9} t={2} /></NavButton>
            <NavButton $w={56} aria-label="Up"><I w={18} h={20}><path d="M9 20V2M1 10L9 2L17 10" stroke="#666" strokeWidth="2" /></I></NavButton>
            <Address>
              <I w={16} h={24}><path d="M8 1V18M1 11L8 18L15 11" stroke="#1fb08e" strokeWidth="2" /><path d="M0 22H16" stroke="#1fb08e" strokeWidth="2" /></I>
              <I w={8} h={10}><path d="M1 1L6 5L1 9" stroke="#555" strokeWidth="2" /></I>
              <span>Downloads</span>
              <button aria-label="Previous locations"><Down w={17} h={10} c="#888" /></button>
              <button aria-label="Refresh"><I w={20} h={20}><path d="M17 5A8 8 0 1 0 18 10M17 1V6H12" stroke="#777" strokeWidth="2" /></I></button>
            </Address>
            <SearchBox><input aria-label="Search Downloads" placeholder="Search Downloads" /><I w={18} h={18}><circle cx="11" cy="7" r="5" stroke="#666" strokeWidth="2.500" /><path d="M8 10L1 17" stroke="#666" strokeWidth="2.500" /></I></SearchBox>
          </NavRow>
          <Fields>
            <label htmlFor="file-name">File name:</label>
            <Combo $strong><input id="file-name" ref={nameRef} defaultValue="sampleexport" /><Down c="#777" /></Combo>
            <label htmlFor="file-type">Save as type:</label>
            <Combo><select id="file-type" defaultValue="e57"><option value="e57">E57 cloud (*.e57)</option></select><Down c="#777" /></Combo>
          </Fields>
          <Footer>
            <Browse><Down w={14} h={10} t={3} c="#333" />Browse Folders</Browse>
            <Push $main>Save<Highlight $x={-8} $y={-10} /></Push>
            <Push>Cancel</Push>
            <SizeGrip width="14" height="14" viewBox="0 0 14 14" aria-hidden="true"><path d="M11 1h3v3h-3zM11 6h3v3h-3zM6 6h3v3h-3zM11 11h3v3h-3zM6 11h3v3h-3zM1 11h3v3h-3z" fill="#bbb" /></SizeGrip>
          </Footer>
        </Dialog>
      </DialogShade>
    </App_>
  );
}
